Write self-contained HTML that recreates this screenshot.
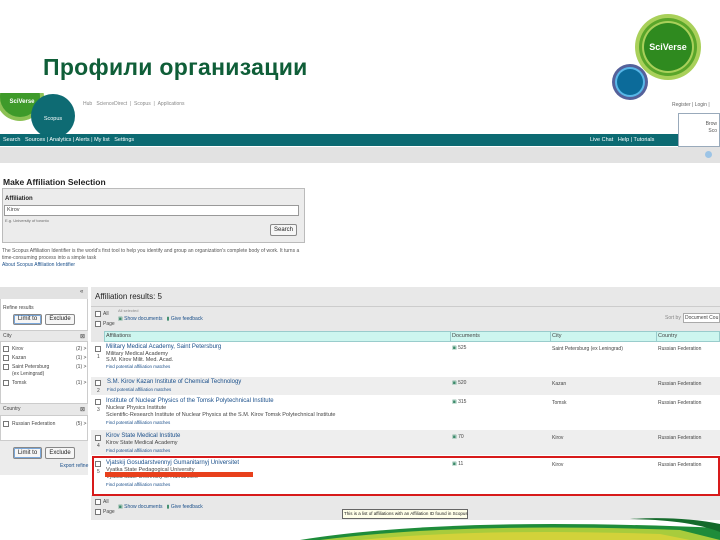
<!DOCTYPE html>
<html><head><meta charset="utf-8"><style>
*{margin:0;padding:0;box-sizing:border-box}
body{width:720px;height:540px;position:relative;overflow:hidden;background:#fff;font-family:"Liberation Sans",sans-serif;font-size:6px;color:#444}
.a{position:absolute;white-space:nowrap}
.lnk{color:#1a4f8a}
.cb{position:absolute;width:6px;height:6px;border:1px solid #777;background:#fff}
.btn{position:absolute;border:1px solid #888;background:#f6f6f6;font-size:6px;text-align:center;color:#222;border-radius:2px}
.bl{box-shadow:inset 0 0 0 1px #7aa7d9}
</style></head><body>
<div class="a" style="left:43px;top:54px;font-size:23px;font-weight:bold;color:#0f5e38;letter-spacing:0.3px">Профили организации</div>
<!-- top right logos -->
<svg class="a" style="left:600px;top:10px" width="120" height="95">
<circle cx="68" cy="37" r="33" fill="#a9d05a"/><circle cx="68" cy="37" r="29" fill="#5aa62a"/><circle cx="68" cy="37" r="26" fill="#a9d05a"/><circle cx="68" cy="37" r="24" fill="#2f8a1f"/>
<text x="68" y="40" font-family="Liberation Sans" font-size="9" font-weight="bold" fill="#fff" text-anchor="middle">SciVerse</text>
<circle cx="30" cy="72" r="18" fill="#55619a"/><circle cx="30" cy="72" r="15" fill="#58b7e8"/><circle cx="30" cy="72" r="13" fill="#0c6b9a"/>
</svg>
<!-- screenshot header -->
<svg class="a" style="left:0;top:93px" width="80" height="45">
<circle cx="20" cy="4" r="24" fill="#8cc155"/><circle cx="20" cy="4" r="20" fill="#3e9a2a"/>
<text x="22" y="10" font-family="Liberation Sans" font-size="6" font-weight="bold" fill="#fff" text-anchor="middle">SciVerse</text>
<circle cx="53" cy="23" r="22" fill="#0e6b73"/>
<text x="53" y="27" font-family="Liberation Sans" font-size="5.5" fill="#fff" text-anchor="middle">Scopus</text>
</svg>
<div class="a" style="left:83px;top:101px;font-size:5px;color:#888">Hub &nbsp; ScienceDirect &nbsp;| &nbsp;Scopus &nbsp;| &nbsp;Applications</div>
<div class="a" style="left:672px;top:102px;font-size:5px;color:#666">Register | Login |</div>
<div class="a" style="left:0;top:134px;width:720px;height:12px;background:#0c6a72"></div>
<div class="a" style="left:3px;top:137px;font-size:5.5px;color:#fff">Search &nbsp; Sources | Analytics | Alerts | My list &nbsp; Settings</div>
<div class="a" style="left:590px;top:137px;font-size:5.5px;color:#fff">Live Chat &nbsp; Help | Tutorials</div>
<div class="a" style="left:678px;top:113px;width:42px;height:34px;background:#fff;border:1px solid #9ab;font-size:5px;text-align:right;padding:7px 2px 0 0;color:#555;line-height:7px">Brow<br>Sco</div>
<div class="a" style="left:0;top:147px;width:720px;height:16px;background:#e2e2e2"></div>
<div class="a" style="left:705px;top:151px;width:7px;height:7px;border-radius:50%;background:#9cc4e6"></div>
<div class="a" style="left:3px;top:177px;font-size:8.5px;font-weight:bold;color:#222">Make Affiliation Selection</div>
<div class="a" style="left:2px;top:188px;width:303px;height:55px;background:#ececec;border:1px solid #bbb"></div>
<div class="a" style="left:5px;top:196px;font-size:6px;font-weight:bold;color:#222">Affiliation</div>
<div class="a" style="left:4px;top:205px;width:295px;height:11px;background:#fff;border:1px solid #999;font-size:5.5px;padding:1px 2px">Kirov</div>
<div class="a" style="left:5px;top:218px;font-size:4px;color:#666">E.g. University of toronto</div>
<div class="btn" style="left:270px;top:224px;width:27px;height:12px;line-height:10px">Search</div>
<div class="a" style="left:2px;top:248px;font-size:5px;color:#555;line-height:7px">The Scopus Affiliation Identifier is the world's first tool to help you identify and group an organization's complete body of work. It turns a<br>time-consuming process into a simple task<br><span class="lnk">About Scopus Affiliation Identifier</span></div>
<!-- left panel -->
<div class="a" style="left:0;top:287px;width:88px;height:188px;border:1px solid #ccc;background:#fff"></div>
<div class="a" style="left:0;top:287px;width:88px;height:12px;background:#e2e2e2"></div>
<div class="a" style="left:80px;top:289px;font-size:6px">«</div>
<div class="a" style="left:3px;top:305px;font-size:5px">Refine results</div>
<div class="btn bl" style="left:13px;top:314px;width:29px;height:11px;line-height:9px">Limit to</div>
<div class="btn" style="left:45px;top:314px;width:30px;height:11px;line-height:9px">Exclude</div>
<div class="a" style="left:0;top:330px;width:88px;height:12px;background:#e8e8e8;border-top:1px solid #ccc;border-bottom:1px solid #ccc"></div>
<div class="a" style="left:3px;top:333px;font-size:5px">City</div><div class="a" style="left:80px;top:333px">⊠</div>
<div class="cb" style="left:3px;top:346px"></div><div class="a" style="left:12px;top:346px;font-size:5px">Kirov</div><div class="a" style="left:76px;top:346px;font-size:5px">(2) &gt;</div>
<div class="cb" style="left:3px;top:355px"></div><div class="a" style="left:12px;top:355px;font-size:5px">Kazan</div><div class="a" style="left:76px;top:355px;font-size:5px">(1) &gt;</div>
<div class="cb" style="left:3px;top:364px"></div><div class="a" style="left:12px;top:364px;font-size:5px;line-height:7px">Saint Petersburg<br>(ex Leningrad)</div><div class="a" style="left:76px;top:364px;font-size:5px">(1) &gt;</div>
<div class="cb" style="left:3px;top:380px"></div><div class="a" style="left:12px;top:380px;font-size:5px">Tomsk</div><div class="a" style="left:76px;top:380px;font-size:5px">(1) &gt;</div>
<div class="a" style="left:0;top:403px;width:88px;height:13px;background:#e8e8e8;border-top:1px solid #ccc;border-bottom:1px solid #ccc"></div>
<div class="a" style="left:3px;top:406px;font-size:5px">Country</div><div class="a" style="left:80px;top:406px">⊠</div>
<div class="cb" style="left:3px;top:421px"></div><div class="a" style="left:12px;top:421px;font-size:5px">Russian Federation</div><div class="a" style="left:76px;top:421px;font-size:5px">(5) &gt;</div>
<div class="a" style="left:0;top:440px;width:88px;height:35px;background:#ececec;border-top:1px solid #ccc"></div>
<div class="btn bl" style="left:13px;top:447px;width:29px;height:12px;line-height:10px">Limit to</div>
<div class="btn" style="left:45px;top:447px;width:30px;height:12px;line-height:10px">Exclude</div>
<div class="a lnk" style="left:60px;top:463px;font-size:5px">Export refine</div>
<!-- right panel -->
<div class="a" style="left:91px;top:287px;width:629px;height:233px;background:#e8e8e8"></div>
<div class="a" style="left:95px;top:292px;font-size:8px;color:#222">Affiliation results: 5</div>
<div class="a" style="left:91px;top:306px;width:629px;height:1px;background:#ccc"></div>
<div class="cb" style="left:95px;top:311px"></div><div class="a" style="left:103px;top:311px;font-size:5px">All</div>
<div class="cb" style="left:95px;top:321px"></div><div class="a" style="left:103px;top:321px;font-size:5px">Page</div>
<div class="a" style="left:118px;top:308px;font-size:4px;color:#888">All selected</div>
<div class="a" style="left:118px;top:316px;font-size:5px;color:#5a7"><span style="color:#3a8a6a">▣</span> <span class="lnk">Show documents</span> &nbsp; <span style="color:#3a8a6a">▮</span> <span class="lnk">Give feedback</span></div>
<div class="a" style="left:665px;top:315px;font-size:5px;color:#888">Sort by</div>
<div class="a" style="left:683px;top:313px;width:37px;height:10px;background:#fff;border:1px solid #aaa;font-size:5px;padding:1px">Document Cou</div>
<div class="a" style="left:104px;top:331px;width:616px;height:11px;background:#cdf6ef;border:1px solid #9cc"></div>
<div class="a" style="left:106px;top:333px;font-size:5.5px">Affiliations</div>
<div class="a" style="left:450px;top:331px;width:1px;height:11px;background:#9cc"></div><div class="a" style="left:452px;top:333px;font-size:5.5px">Documents</div>
<div class="a" style="left:550px;top:331px;width:1px;height:11px;background:#9cc"></div><div class="a" style="left:552px;top:333px;font-size:5.5px">City</div>
<div class="a" style="left:656px;top:331px;width:1px;height:11px;background:#9cc"></div><div class="a" style="left:658px;top:333px;font-size:5.5px">Country</div>
<!-- rows -->
<div class="a" style="left:91px;top:342px;width:629px;height:35px;background:#fff"></div>
<div class="a" style="left:91px;top:377px;width:629px;height:18px;background:#eeeeee"></div>
<div class="a" style="left:91px;top:395px;width:629px;height:35px;background:#fff"></div>
<div class="a" style="left:91px;top:430px;width:629px;height:25px;background:#eeeeee"></div>
<div class="a" style="left:91px;top:455px;width:629px;height:40px;background:#fff"></div>

<div class="cb" style="left:95px;top:346px"></div><div class="a" style="left:97px;top:354px;font-size:5px">1</div>
<div class="a" style="left:106px;top:344px;font-size:5.5px;line-height:6.5px"><span class="lnk" style="font-size:6px">Military Medical Academy, Saint Petersburg</span><br>Military Medical Academy<br>S.M. Kirov Milit. Med. Acad.<br><span class="lnk" style="font-size:4.5px">Find potential affiliation matches</span></div>
<div class="cb" style="left:95px;top:380px"></div><div class="a" style="left:97px;top:388px;font-size:5px">2</div>
<div class="a" style="left:107px;top:379px;font-size:5.5px;line-height:7px"><span class="lnk" style="font-size:6px">S.M. Kirov Kazan Institute of Chemical Technology</span><br><span class="lnk" style="font-size:4.5px">Find potential affiliation matches</span></div>
<div class="cb" style="left:95px;top:399px"></div><div class="a" style="left:97px;top:407px;font-size:5px">3</div>
<div class="a" style="left:106px;top:398px;font-size:5.5px;line-height:7px"><span class="lnk" style="font-size:6px">Institute of Nuclear Physics of the Tomsk Polytechnical Institute</span><br>Nuclear Physics Institute<br>Scientific-Research Institute of Nuclear Physics at the S.M. Kirov Tomsk Polytechnical Institute<br><span class="lnk" style="font-size:4.5px">Find potential affiliation matches</span></div>
<div class="cb" style="left:95px;top:435px"></div><div class="a" style="left:97px;top:443px;font-size:5px">4</div>
<div class="a" style="left:106px;top:433px;font-size:5.5px;line-height:7px"><span class="lnk" style="font-size:6px">Kirov State Medical Institute</span><br>Kirov State Medical Academy<br><span class="lnk" style="font-size:4.5px">Find potential affiliation matches</span></div>
<div class="cb" style="left:95px;top:461px"></div><div class="a" style="left:97px;top:469px;font-size:5px">5</div>
<div class="a" style="left:106px;top:460px;font-size:5.5px;line-height:7px"><span class="lnk" style="font-size:6px">Vjatskij Gosudarstvennyj Gumanitarnyj Universitet</span><br>Vyatka State Pedagogical University<br>Vyatka State University of Humanities<br><span class="lnk" style="font-size:4.5px">Find potential affiliation matches</span></div>
<div class="a" style="left:105px;top:472px;width:148px;height:5px;background:#e8401c"></div>
<div class="a" style="left:452px;top:345px;font-size:5px"><span style="color:#3a8a6a">▣</span> 525</div><div class="a" style="left:552px;top:346px;font-size:5px">Saint Petersburg (ex Leningrad)</div><div class="a" style="left:658px;top:346px;font-size:5px">Russian Federation</div>
<div class="a" style="left:452px;top:380px;font-size:5px"><span style="color:#3a8a6a">▣</span> 520</div><div class="a" style="left:552px;top:381px;font-size:5px">Kazan</div><div class="a" style="left:658px;top:381px;font-size:5px">Russian Federation</div>
<div class="a" style="left:452px;top:399px;font-size:5px"><span style="color:#3a8a6a">▣</span> 315</div><div class="a" style="left:552px;top:400px;font-size:5px">Tomsk</div><div class="a" style="left:658px;top:400px;font-size:5px">Russian Federation</div>
<div class="a" style="left:452px;top:434px;font-size:5px"><span style="color:#3a8a6a">▣</span> 70</div><div class="a" style="left:552px;top:435px;font-size:5px">Kirov</div><div class="a" style="left:658px;top:435px;font-size:5px">Russian Federation</div>
<div class="a" style="left:452px;top:461px;font-size:5px"><span style="color:#3a8a6a">▣</span> 11</div><div class="a" style="left:552px;top:462px;font-size:5px">Kirov</div><div class="a" style="left:658px;top:462px;font-size:5px">Russian Federation</div>
<div class="a" style="left:92px;top:456px;width:628px;height:40px;border:2px solid #d71a1a"></div>
<div class="cb" style="left:95px;top:499px"></div><div class="a" style="left:103px;top:499px;font-size:5px">All</div>
<div class="cb" style="left:95px;top:509px"></div><div class="a" style="left:103px;top:509px;font-size:5px">Page</div>
<div class="a" style="left:118px;top:504px;font-size:5px"><span style="color:#3a8a6a">▣</span> <span class="lnk">Show documents</span> &nbsp; <span style="color:#3a8a6a">▮</span> <span class="lnk">Give feedback</span></div>
<div class="a" style="left:342px;top:509px;width:126px;height:10px;background:#ffffe8;border:1px solid #666;font-size:4.5px;padding:1px 1px;color:#222">This is a list of affiliations with an Affiliation ID found in Scopus</div>
<svg class="a" style="left:300px;top:518px" width="420" height="22">
<path d="M0 22 Q150 -2 420 10 L420 22 Z" fill="#1e8c3a"/>
<path d="M20 22 Q160 4 380 12 L420 22 Z" fill="#a8cc3c"/>
<path d="M60 22 Q180 10 360 16 L390 22 Z" fill="#d2d23a"/>
<path d="M330 1 Q390 2 420 14 L420 6 Q380 -2 330 1Z" fill="#156b2c"/>
</svg>
</body></html>
